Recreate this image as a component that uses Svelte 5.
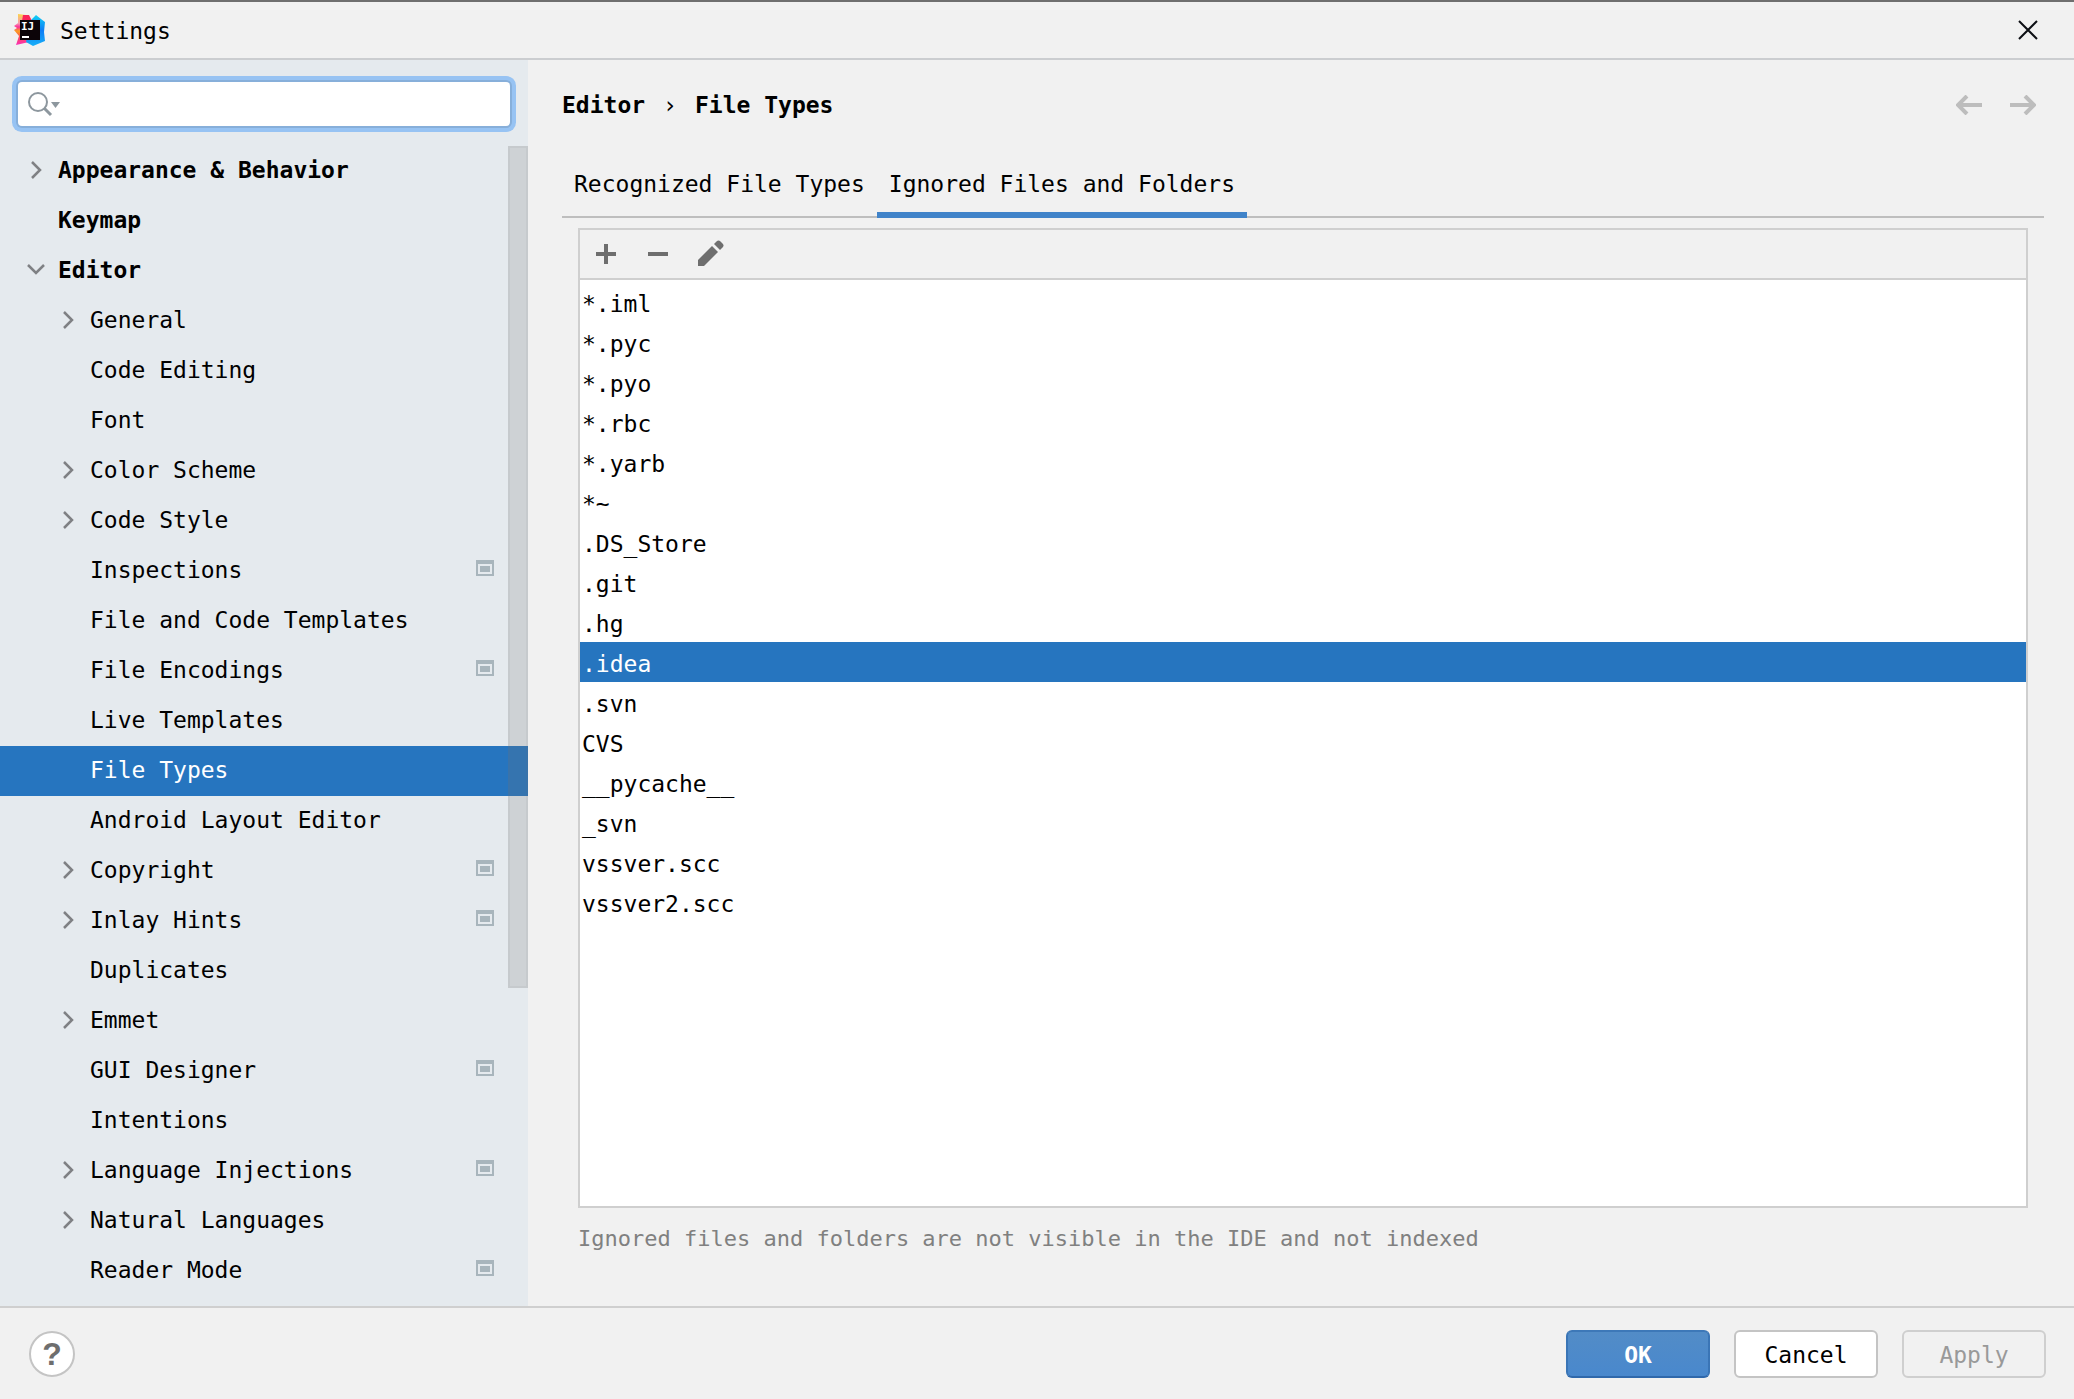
<script>
  let query = $state('');
  let activePage = $state('File Types');
  let activeTab = $state('Ignored Files and Folders');
  let selected = $state('.idea');

  // arrow: 'right' = collapsed group, 'down' = expanded group
  const pages = [
    { name: 'Appearance & Behavior', arrow: 'right', top: true },
    { name: 'Keymap', top: true },
    { name: 'Editor', arrow: 'down', top: true },
    { name: 'General', arrow: 'right' },
    { name: 'Code Editing' },
    { name: 'Font' },
    { name: 'Color Scheme', arrow: 'right' },
    { name: 'Code Style', arrow: 'right' },
    { name: 'Inspections', project: true },
    { name: 'File and Code Templates' },
    { name: 'File Encodings', project: true },
    { name: 'Live Templates' },
    { name: 'File Types' },
    { name: 'Android Layout Editor' },
    { name: 'Copyright', arrow: 'right', project: true },
    { name: 'Inlay Hints', arrow: 'right', project: true },
    { name: 'Duplicates' },
    { name: 'Emmet', arrow: 'right' },
    { name: 'GUI Designer', project: true },
    { name: 'Intentions' },
    { name: 'Language Injections', arrow: 'right', project: true },
    { name: 'Natural Languages', arrow: 'right' },
    { name: 'Reader Mode', project: true }
  ];

  const tabs = ['Recognized File Types', 'Ignored Files and Folders'];

  let patterns = $state([
    '*.iml', '*.pyc', '*.pyo', '*.rbc', '*.yarb', '*~', '.DS_Store', '.git',
    '.hg', '.idea', '.svn', 'CVS', '__pycache__', '_svn', 'vssver.scc', 'vssver2.scc'
  ]);

  function removeSelected() {
    patterns = patterns.filter((p) => p !== selected);
  }
</script>

<div class="window">
  <header class="titlebar">
    <svg class="logo" viewBox="0 0 32 32" aria-hidden="true">
      <defs>
        <linearGradient id="warm" x1="0" y1="0" x2="0" y2="1">
          <stop offset="0" stop-color="#fbd34a" />
          <stop offset="0.3" stop-color="#f79ab0" />
          <stop offset="0.42" stop-color="#fb2f9c" />
          <stop offset="0.55" stop-color="#fba01e" />
          <stop offset="0.75" stop-color="#fb4a5c" />
          <stop offset="1" stop-color="#fb2dbc" />
        </linearGradient>
        <linearGradient id="cool" x1="0" y1="0" x2="0" y2="1">
          <stop offset="0" stop-color="#12d0f4" />
          <stop offset="0.5" stop-color="#0d7cf5" />
          <stop offset="1" stop-color="#17b0f8" />
        </linearGradient>
      </defs>
      <path d="M4 0l8 1 6 14-3 13-13 3 3-9-5-6 3-2-3-2 4-3z" fill="url(#warm)" />
      <path d="M9 1h6l3 6H8z" fill="#fb2358" />
      <path d="M17 6l5-5 5 4 4 3-1 10 1 9-12 5-7-4z" fill="url(#cool)" />
      <path d="M6 6h20v20H6z" fill="#0c0408" />
      <text x="7" y="16" fill="#fff">IJ</text>
      <path d="M8 22h7v2H8z" fill="#fff" />
    </svg>
    <h1>Settings</h1>
    <button class="icon-btn close" aria-label="Close">
      <svg width="20" height="20" viewBox="0 0 20 20"><path d="M1 1l18 18M19 1L1 19" stroke="#0d0f14" stroke-width="2" /></svg>
    </button>
  </header>

  <div class="body">
    <aside>
      <label class="search">
        <svg width="32" height="26" viewBox="0 0 32 26" aria-hidden="true">
          <circle cx="10" cy="11" r="9" fill="none" stroke="#8d979e" stroke-width="2" />
          <path d="M16 17l7 7" stroke="#8d979e" stroke-width="3" />
          <path d="M23 11h9l-4.500 6z" fill="#8d979e" />
        </svg>
        <input type="text" aria-label="Search settings" bind:value={query} />
      </label>

      <div class="tree-wrap">
        <ul class="tree">
          {#each pages as page}
            <li>
              <button
                class="node"
                class:top={page.top}
                class:active={page.name === activePage}
                onclick={() => (activePage = page.name)}
              >
                <span class="arrow">
                  {#if page.arrow === 'right'}
                    <svg width="20" height="20" viewBox="0 0 20 20"><path d="M6 2l8 8-8 8" /></svg>
                  {:else if page.arrow === 'down'}
                    <svg width="20" height="20" viewBox="0 0 20 20"><path d="M2 5l8 8 8-8" /></svg>
                  {/if}
                </span>
                <span class="name">{page.name}</span>
                {#if page.project}
                  <svg class="project" width="18" height="16" viewBox="0 0 18 16">
                    <path d="M0 0h18v16H0zM2 4v10h14V4z" fill-rule="evenodd" />
                    <path d="M4 6h10v6H4z" />
                  </svg>
                {/if}
              </button>
            </li>
          {/each}
        </ul>
        <div class="scrollbar"></div>
      </div>
    </aside>

    <main>
      <div class="heading">
        <h2><span>Editor</span><span class="sep">›</span><span>File Types</span></h2>
        <nav>
          <button class="icon-btn" aria-label="Back">
            <svg width="26" height="20" viewBox="0 0 26 20"><path d="M26 10H3M11 1l-9 9 9 9" /></svg>
          </button>
          <button class="icon-btn" aria-label="Forward">
            <svg width="26" height="20" viewBox="0 0 26 20"><path d="M0 10h23M15 1l9 9-9 9" /></svg>
          </button>
        </nav>
      </div>

      <div class="tabs" role="tablist">
        {#each tabs as tab}
          <button
            role="tab"
            aria-selected={tab === activeTab}
            class:current={tab === activeTab}
            onclick={() => (activeTab = tab)}>{tab}</button>
        {/each}
      </div>

      <section class="panel">
        <div class="toolbar">
          <button class="icon-btn" aria-label="Add">
            <svg width="28" height="28" viewBox="0 0 28 28"><path d="M12 4h4v8h8v4h-8v8h-4v-8H4v-4h8z" /></svg>
          </button>
          <button class="icon-btn" aria-label="Remove" onclick={removeSelected}>
            <svg width="28" height="28" viewBox="0 0 28 28"><path d="M4 12h20v4H4z" /></svg>
          </button>
          <button class="icon-btn" aria-label="Edit">
            <svg width="28" height="28" viewBox="0 0 28 28">
              <path d="M2 20L16 6l6 6L8 26H2z" />
              <path d="M18 4l2.500-2.500q2-2 4 0l2 2q2 2 0 4L24 10z" />
            </svg>
          </button>
        </div>
        <ul class="patterns" role="listbox" aria-label="Ignored files and folders">
          {#each patterns as pattern}
            <li role="option" aria-selected={pattern === selected}>
              <button class:selected={pattern === selected} onclick={() => (selected = pattern)}>{pattern}</button>
            </li>
          {/each}
        </ul>
      </section>
      <p class="hint">Ignored files and folders are not visible in the IDE and not indexed</p>
    </main>
  </div>

  <footer>
    <button class="help" aria-label="Help">?</button>
    <div class="actions">
      <button class="btn ok">OK</button>
      <button class="btn">Cancel</button>
      <button class="btn" disabled>Apply</button>
    </div>
  </footer>
</div>

<style>
  :global(body) {
    background: #f1f1f1;
  }

  .window {
    box-sizing: border-box;
    min-height: 100vh;
    display: flex;
    flex-direction: column;
    border-top: 2px solid #6f6f6f;
    background: #f1f1f1;
    color: #000;
    font: 23px/30px 'DejaVu Sans Mono', 'Liberation Mono', monospace;
  }

  button, input {
    font: inherit;
    color: inherit;
    margin: 0;
    padding: 0;
    border: 0;
    background: none;
    outline: none;
  }
  svg { display: block; flex: none; }
  h1, h2, p, ul { margin: 0; padding: 0; font: inherit; }
  ul { list-style: none; }

  .titlebar {
    display: flex;
    align-items: center;
    gap: 14px;
    height: 56px;
    padding: 0 36px 0 14px;
    border-bottom: 2px solid #cbcdd0;
  }
  .logo { width: 32px; height: 32px; }
  .logo text { font-size: 11px; font-weight: bold; }
  h1 { padding-top: 2px; }
  .close { margin-left: auto; }

  .body { flex: 1; display: flex; }

  aside {
    width: 528px;
    flex: none;
    background: #e5eaee;
  }
  .search {
    display: flex;
    align-items: center;
    gap: 8px;
    height: 44px;
    margin: 22px 18px 20px;
    padding: 0 10px;
    box-sizing: border-box;
    border-radius: 4px;
    background: #fff;
    box-shadow: 0 0 0 2px #87afda, 0 0 0 6px #97c3f3;
  }
  .search input { flex: 1; min-width: 0; }

  .tree-wrap { position: relative; }
  .tree { padding-bottom: 10px; }
  .node {
    display: flex;
    align-items: center;
    gap: 12px;
    width: 100%;
    height: 50px;
    padding: 0 34px 2px 58px;
    text-align: left;
  }
  .node.top { padding-left: 26px; font-weight: bold; }
  .node.active { background: #2675bf; color: #fff; }
  .arrow { width: 20px; flex: none; }
  .arrow path { fill: none; stroke: #7f8184; stroke-width: 2.5; }
  .name { flex: 1; white-space: nowrap; }
  .project { margin-bottom: 4px; fill: #a8b5bc; }
  .scrollbar {
    position: absolute;
    top: 0;
    right: 0;
    width: 20px;
    height: 842px;
    box-sizing: border-box;
    border: 2px solid rgba(110, 110, 110, 0.08);
    background: rgba(115, 115, 115, 0.2);
  }

  main {
    flex: 1;
    min-width: 0;
    display: flex;
    flex-direction: column;
    padding: 30px 30px 52px 34px;
  }
  .heading {
    display: flex;
    justify-content: space-between;
    align-items: center;
    padding-right: 8px;
    font-weight: bold;
  }
  h2 { display: flex; gap: 18px; }
  .sep { font-weight: normal; }
  nav { display: flex; gap: 28px; }
  nav path { fill: none; stroke: #bdbdbd; stroke-width: 4; }

  .tabs {
    display: flex;
    margin-top: 36px;
    box-shadow: inset 0 -2px #bebebe;
  }
  .tabs button {
    height: 62px;
    padding: 0 12px 6px;
    white-space: nowrap;
  }
  .tabs .current { box-shadow: inset 0 -6px #4083c9; }

  .panel {
    flex: 1;
    display: flex;
    flex-direction: column;
    margin: 10px 16px 0;
    border: 2px solid #cfcfcf;
  }
  .toolbar {
    display: flex;
    align-items: center;
    gap: 24px;
    height: 48px;
    padding: 0 12px;
    border-bottom: 2px solid #cfcfcf;
  }
  .toolbar path { fill: #6e6e6e; }
  .patterns {
    flex: 1;
    padding-top: 2px;
    background: #fff;
  }
  .patterns button {
    display: block;
    width: 100%;
    height: 40px;
    padding: 3px 2px 0;
    text-align: left;
  }
  .patterns .selected { background: #2675bf; color: #fff; }
  .hint {
    margin: 16px 16px 0;
    color: #808080;
    font-size: 22px;
  }

  footer {
    display: flex;
    justify-content: space-between;
    align-items: center;
    height: 91px;
    padding: 0 28px 0 29px;
    border-top: 2px solid #cfcfcf;
  }
  .help {
    width: 46px;
    height: 46px;
    border: 2px solid #c4c4c4;
    border-radius: 50%;
    background: #fff;
    color: #6e6e6e;
    font: bold 32px/42px 'Liberation Sans', sans-serif;
  }
  .actions { display: flex; gap: 24px; }
  .btn {
    width: 144px;
    height: 48px;
    padding-top: 2px;
    border: 2px solid #c4c4c4;
    border-radius: 6px;
    background: #fff;
  }
  .btn.ok {
    border-color: #3d78b8 #3a75b6 #2f68ab;
    background: linear-gradient(#528cc7, #4988cd);
    color: #fff;
    font-weight: bold;
  }
  .btn:disabled {
    border-color: #cfcfcf;
    background: none;
    color: #999;
  }
</style>
